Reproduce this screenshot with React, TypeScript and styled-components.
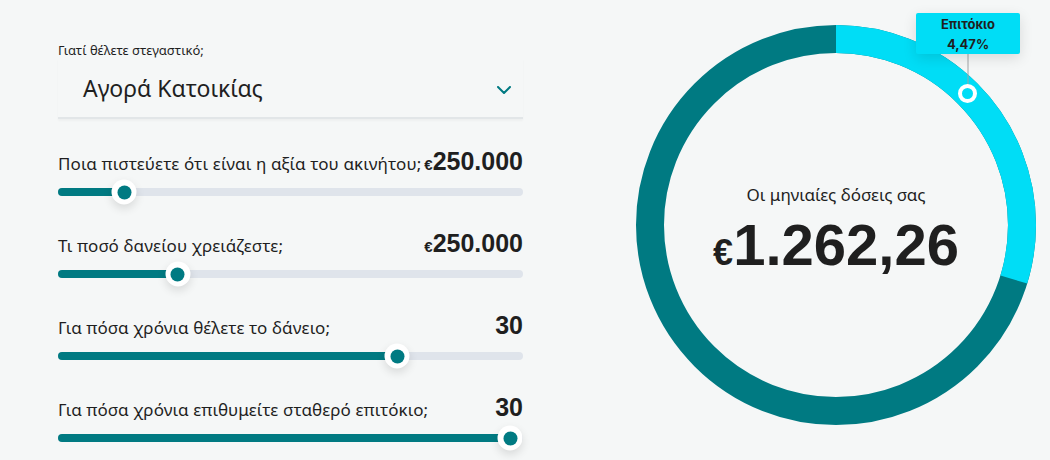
import React from "react";
import styled, { createGlobalStyle } from "styled-components";

const TEAL = "#007a82";
const CYAN = "#00ddf6";
const TEXT = "#1f1f1f";

const GlobalStyle = createGlobalStyle`
  *, *::before, *::after { box-sizing: border-box; }
  html, body { margin: 0; padding: 0; background: #f5f7f7; }
  body { font-family: "Noto Sans", "DejaVu Sans", sans-serif; color: ${TEXT}; }
`;

const Page = styled.div`
  display: flex;
  align-items: flex-start;
  gap: 113px;
  padding: 25px 0 0 58px;
  width: 1050px;
  height: 460px;
  overflow: hidden;
`;

const LeftColumn = styled.div`
  width: 465px;
  padding-top: 17px;
  display: flex;
  flex-direction: column;
`;

const FieldLabel = styled.div`
  font-size: 13px;
  line-height: 16px;
  color: ${TEXT};
`;

const Select = styled.div`
  height: 61px;
  display: flex;
  align-items: center;
  justify-content: space-between;
  padding: 0 12px 0 25px;
  border-bottom: 2px solid #e2e6e8;
  box-shadow: 0 2px 2px rgba(0, 0, 0, 0.03);
`;

const SelectValue = styled.span`
  font-size: 23px;
  line-height: 32px;
  color: ${TEXT};
`;

const Chevron = styled.svg`
  width: 14px;
  height: 8px;
  margin-top: 5px;
`;

const SliderList = styled.div`
  display: flex;
  flex-direction: column;
  gap: 25px;
  margin-top: 28px;
`;

const SliderRow = styled.div`
  display: flex;
  flex-direction: column;
`;

const RowHeader = styled.div`
  display: flex;
  justify-content: space-between;
  align-items: baseline;
  height: 28px;
`;

const RowLabel = styled.span`
  font-size: 17px;
  line-height: 24px;
  letter-spacing: 0.1px;
  white-space: nowrap;
  color: ${TEXT};
`;

const RowValue = styled.span`
  font-family: "Liberation Sans", Arial, sans-serif;
  font-weight: 700;
  font-size: 25px;
  line-height: 28px;
  white-space: nowrap;
  color: ${TEXT};
`;

const SmallEuro = styled.span`
  font-size: 15px;
`;

const TrackArea = styled.div`
  position: relative;
  height: 24px;
  margin-top: 5px;
  display: flex;
  align-items: center;
`;

const Track = styled.div`
  position: relative;
  width: 100%;
  height: 8px;
  border-radius: 4px;
  background: #dfe4eb;
`;

const Fill = styled.div`
  height: 100%;
  border-radius: 4px;
  background: ${TEAL};
`;

const Thumb = styled.div`
  position: absolute;
  top: 50%;
  width: 25px;
  height: 25px;
  border-radius: 50%;
  background: #fff;
  transform: translate(-50%, -50%);
  box-shadow: 0 4px 10px rgba(0, 0, 0, 0.12);
  display: flex;
  align-items: center;
  justify-content: center;
  &::after {
    content: "";
    width: 14px;
    height: 14px;
    border-radius: 50%;
    background: ${TEAL};
  }
`;

const ChartWrap = styled.div`
  position: relative;
  width: 400px;
  height: 400px;
  display: grid;
  flex-shrink: 0;
`;

const ChartSvg = styled.svg`
  grid-area: 1 / 1;
  width: 400px;
  height: 400px;
`;

const CenterBlock = styled.div`
  grid-area: 1 / 1;
  display: flex;
  flex-direction: column;
  align-items: center;
  justify-content: center;
  padding-top: 14px;
  gap: 10px;
`;

const CenterLabel = styled.div`
  font-size: 17px;
  line-height: 22px;
  letter-spacing: -0.05px;
  color: ${TEXT};
`;

const Amount = styled.div`
  font-family: "Liberation Sans", Arial, sans-serif;
  font-weight: 700;
  font-size: 58px;
  line-height: 57px;
  color: ${TEXT};
  display: flex;
  align-items: baseline;
`;

const AmountEuro = styled.span`
  font-size: 36px;
`;

const Tooltip = styled.div`
  position: absolute;
  left: 280px;
  top: -12px;
  width: 104px;
  height: 41px;
  padding-top: 1px;
  background: ${CYAN};
  border-radius: 2px;
  box-shadow: 0 4px 14px rgba(0, 0, 0, 0.12);
  text-align: center;
  font-family: Inter, "Noto Sans", sans-serif;
  font-weight: 700;
  font-size: 13px;
  line-height: 20px;
  color: ${TEXT};
`;

type SliderItem = {
  label: string;
  value: string;
  euro?: boolean;
  pct: number;
};

const sliders: SliderItem[] = [
  { label: "Ποια πιστεύετε ότι είναι η αξία του ακινήτου;", value: "250.000", euro: true, pct: 14.2 },
  { label: "Τι ποσό δανείου χρειάζεστε;", value: "250.000", euro: true, pct: 25.7 },
  { label: "Για πόσα χρόνια θέλετε το δάνειο;", value: "30", pct: 72.95 },
  { label: "Για πόσα χρόνια επιθυμείτε σταθερό επιτόκιο;", value: "30", pct: 97.3 },
];

const R = 186;
const C = 2 * Math.PI * R;
const interestDeg = 107;

export default function App() {
  return (
    <>
      <GlobalStyle />
      <Page>
        <LeftColumn>
          <FieldLabel>Γιατί θέλετε στεγαστικό;</FieldLabel>
          <Select>
            <SelectValue>Αγορά Κατοικίας</SelectValue>
            <Chevron viewBox="0 0 14 8" fill="none">
              <path d="M1 1l6 6 6-6" stroke={TEAL} strokeWidth="2" strokeLinecap="round" strokeLinejoin="round" />
            </Chevron>
          </Select>
          <SliderList>
            {sliders.map((s) => (
              <SliderRow key={s.label}>
                <RowHeader>
                  <RowLabel>{s.label}</RowLabel>
                  <RowValue>
                    {s.euro && <SmallEuro>€</SmallEuro>}
                    {s.value}
                  </RowValue>
                </RowHeader>
                <TrackArea>
                  <Track>
                    <Fill style={{ width: `${s.pct}%` }} />
                    <Thumb style={{ left: `${s.pct}%` }} />
                  </Track>
                </TrackArea>
              </SliderRow>
            ))}
          </SliderList>
        </LeftColumn>
        <ChartWrap>
          <ChartSvg viewBox="0 0 400 400">
            <circle cx="200" cy="200" r={R} fill="none" stroke={TEAL} strokeWidth="28" />
            <circle
              cx="200"
              cy="200"
              r={R}
              fill="none"
              stroke={CYAN}
              strokeWidth="28"
              strokeDasharray={`${(C * interestDeg) / 360} ${C}`}
              transform="rotate(-90 200 200)"
            />
            <line x1="332" y1="29" x2="332" y2="60" stroke="#9fa4a6" strokeWidth="1" />
            <circle cx="331.5" cy="68.5" r="7.5" fill={CYAN} stroke="#fff" strokeWidth="4" />
          </ChartSvg>
          <CenterBlock>
            <CenterLabel>Οι μηνιαίες δόσεις σας</CenterLabel>
            <Amount>
              <AmountEuro>€</AmountEuro>1.262,26
            </Amount>
          </CenterBlock>
          <Tooltip>
            <div>Επιτόκιο</div>
            <div>4,47%</div>
          </Tooltip>
        </ChartWrap>
      </Page>
    </>
  );
}
